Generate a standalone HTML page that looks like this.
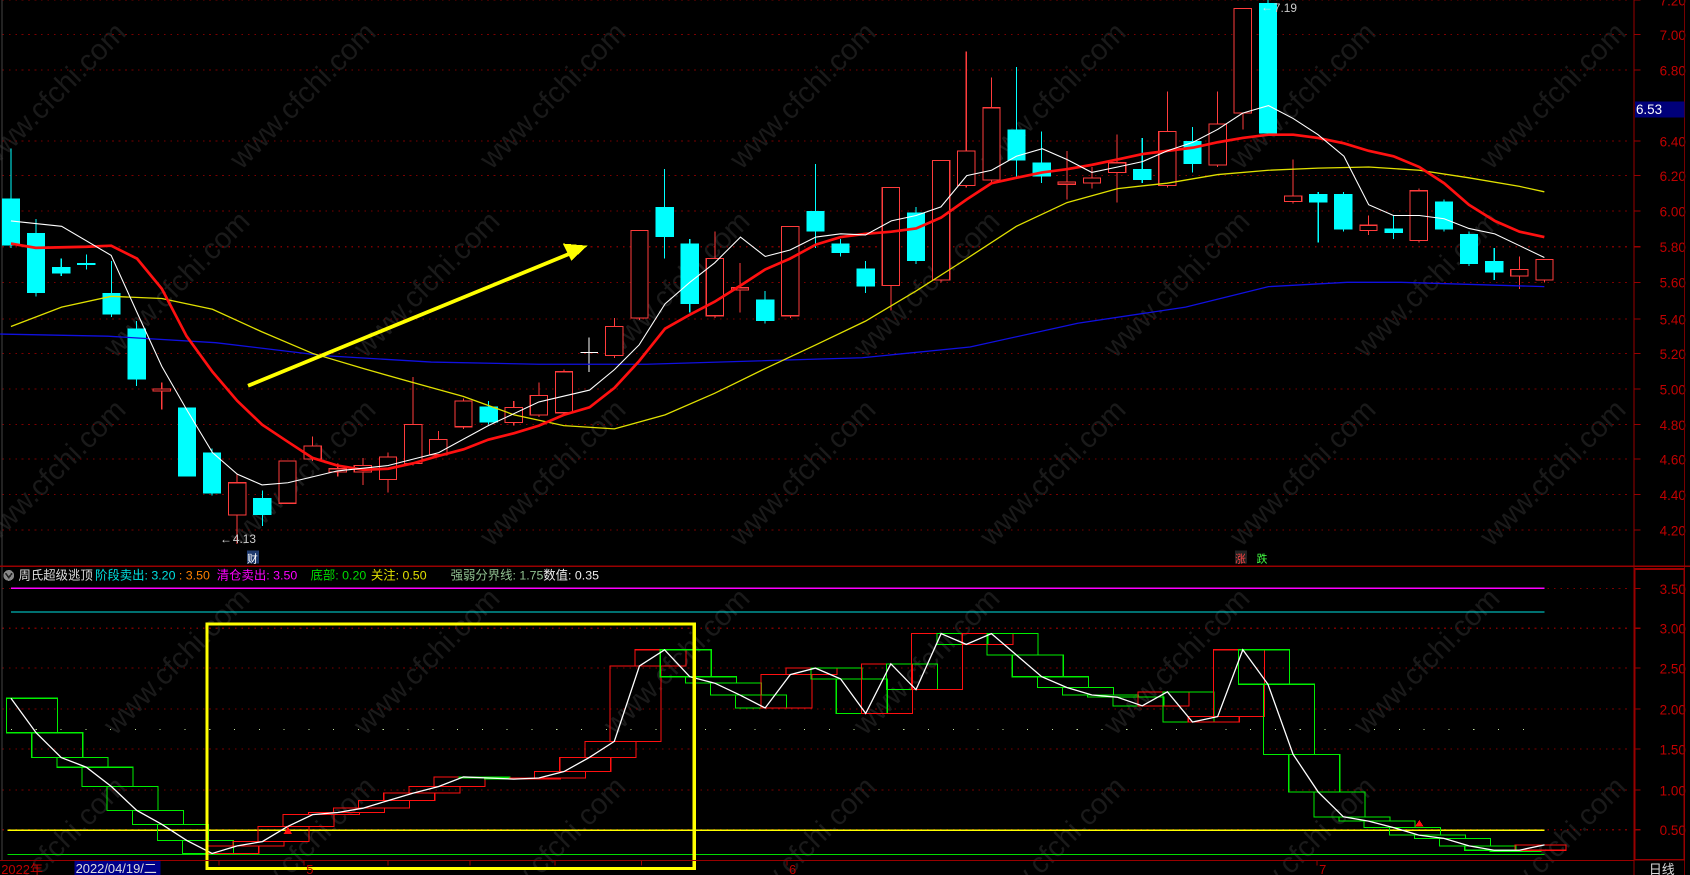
<!DOCTYPE html>
<html><head><meta charset="utf-8">
<style>
html,body{margin:0;padding:0;background:#000;overflow:hidden;width:1690px;height:875px}
svg{display:block;overflow:hidden}
text{font-family:"Liberation Sans","Noto Sans CJK SC",sans-serif}
</style></head>
<body>
<svg id="s" width="1690" height="875" viewBox="0 0 1568 812" xmlns="http://www.w3.org/2000/svg" shape-rendering="crispEdges"></svg>
<script>
var o=[];
function A(s){o.push(s)}
A('<rect width="1568" height="812" fill="#000"/>');
for(var r=0;r<5;r++)for(var c=0;c<8;c++){var x=55+c*232+(r%2?115:0),y=95+r*175;if(x>1500)continue;
A('<text x="'+x+'" y="'+y+'" fill="#1a1a1a" font-size="27" text-anchor="middle" transform="rotate(-45 '+x+' '+y+')">www.cfchi.com</text>');}
var labs=[["7.20",0],["7.00",32],["6.80",65],["6.40",131],["6.20",163],["6.00",196],["5.80",229],["5.60",262],["5.40",296],["5.20",328],["5.00",361],["4.80",394],["4.60",426],["4.40",459],["4.20",492]];
labs.forEach(function(l){A('<line x1="2" y1="'+l[1]+'" x2="1510" y2="'+l[1]+'" stroke="#7a0000" stroke-dasharray="1.5 4.5"/>');
A('<line x1="1516" y1="'+l[1]+'" x2="1522" y2="'+l[1]+'" stroke="#900"/>');
A('<text x="1540" y="'+(l[1]+5)+'" fill="#c00000" font-size="12.5">'+l[0]+'</text>');});
A('<line x1="1.5" y1="0" x2="1.5" y2="798" stroke="#444"/>');
A('<line x1="1516" y1="0" x2="1516" y2="812" stroke="#900"/>');
A('<line x1="1563" y1="0" x2="1563" y2="812" stroke="#700"/>');
A('<line x1="0" y1="525.5" x2="1568" y2="525.5" stroke="#900"/>');
A('<rect x="1517" y="94" width="46" height="15" fill="#00007a"/><text x="1518" y="106" fill="#fff" font-size="12.5">6.53</text>');
var X=function(i){return 10+i*23.33};
var C=[[184,228,138,230,'c'],[216,272,203,275,'c'],[248,254,240,256,'c'],[244,246,236,250,'c'],[272,292,242,294,'c'],[305,352,298,358,'c'],[361,363,355,380,'r'],[378,442,378,442,'c'],[420,458,416,460,'c'],[448,478,440,505,'r'],[462,478,455,488,'c'],[428,467,428,467,'r'],[414,426,405,428,'r'],[435,438,430,442,'r'],[432,438,425,450,'r'],[424,445,420,457,'r'],[394,430,350,432,'r'],[408,422,400,424,'r'],[372,396,370,398,'r'],[377,392,372,394,'c'],[378,392,372,395,'r'],[367,385,355,387,'r'],[345,383,343,385,'r'],[327,328,313,345,'w'],[303,330,295,332,'r'],[214,295,214,297,'r'],[192,220,157,240,'c'],[226,282,222,290,'c'],[240,293,215,295,'r'],[267,269,244,290,'r'],[278,298,270,300,'c'],[210,293,210,295,'r'],[196,215,152,230,'c'],[226,235,222,238,'c'],[249,266,242,272,'c'],[174,265,174,288,'r'],[197,242,192,245,'c'],[149,260,149,262,'r'],[140,172,48,174,'r'],[100,167,72,169,'r'],[120,149,62,165,'c'],[151,164,122,170,'c'],[169,171,140,185,'r'],[165,170,155,175,'r'],[151,160,125,188,'r'],[157,167,128,170,'c'],[122,172,85,174,'r'],[131,152,118,160,'c'],[115,153,85,155,'r'],[8,105,8,120,'r'],[3,124,0,126,'c'],[182,187,148,189,'r'],[180,188,178,225,'c'],[180,213,178,215,'c'],[209,214,200,218,'r'],[212,216,200,222,'c'],[177,223,175,225,'r'],[187,213,185,215,'c'],[217,245,215,247,'c'],[242,253,230,260,'c'],[250,256,238,268,'r'],[241,260,241,262,'r']];
C.forEach(function(d,i){var x=X(i),col=d[4]=='c'?'#00ffff':(d[4]=='w'?'#fff':'#ff3c3c');
A('<line x1="'+x+'" y1="'+d[2]+'" x2="'+x+'" y2="'+d[3]+'" stroke="'+col+'"/>');
if(d[4]=='c')A('<rect x="'+(x-8.5)+'" y="'+d[0]+'" width="17" height="'+Math.max(2,d[1]-d[0])+'" fill="#00ffff"/>');
else if(d[4]=='w')A('<line x1="'+(x-8)+'" y1="'+d[0]+'" x2="'+(x+8)+'" y2="'+d[0]+'" stroke="#fff"/>');
else A('<rect x="'+(x-8)+'" y="'+d[0]+'" width="16" height="'+Math.max(1,d[1]-d[0])+'" fill="#000" stroke="#ff3c3c"/>');});
function P(pts,col,w){A('<polyline points="'+pts+'" fill="none" stroke="'+col+'" stroke-width="'+w+'" shape-rendering="auto"/>')}
P("0,310 100,312 200,318 300,330 400,336 500,338 600,338 700,335 800,332 900,322 1000,300 1100,285 1177,266 1250,262 1300,262 1433,266","#1010e0",1.2);
P("10,303 57,285 103,275 150,277 197,287 243,308 290,328 337,342 383,355 430,368 477,385 523,395 570,398 617,385 663,365 710,342 757,320 803,298 850,270 897,240 943,210 990,188 1037,175 1083,170 1130,162 1177,158 1223,156 1270,155 1317,158 1363,165 1410,173 1433,178","#e0e000",1.2);
P("10,226 33,230 80,229 103,228 127,240 150,268 173,312 197,345 220,372 243,394 267,410 290,425 313,432 337,436 360,435 383,430 407,423 430,417 453,408 477,402 500,395 523,385 547,378 570,360 593,335 617,305 640,292 663,280 687,265 710,250 733,240 757,227 780,220 803,217 827,215 850,212 873,202 897,185 920,170 943,165 967,160 990,157 1013,153 1037,148 1060,143 1083,140 1107,137 1130,132 1153,128 1177,125 1200,125 1223,128 1247,133 1270,140 1293,145 1317,155 1340,170 1363,190 1387,205 1410,215 1433,220","#ff1010",2.5);
P("10,205 57,210 103,237 127,290 150,340 173,380 197,420 220,440 243,450 267,448 313,437 360,432 407,420 453,395 500,373 547,362 570,343 593,320 617,282 640,262 663,244 687,220 710,238 733,232 757,220 780,217 803,218 827,205 850,200 873,192 897,163 920,158 943,145 967,138 990,148 1013,160 1037,155 1060,150 1083,140 1107,132 1130,120 1153,105 1177,98 1200,110 1223,125 1247,145 1270,190 1293,200 1317,200 1340,203 1363,212 1387,217 1410,228 1433,239","#fff",1);
A('<line x1="230" y1="358" x2="532" y2="234" stroke="#ffff00" stroke-width="3.5" shape-rendering="auto"/><polygon points="545,228 522,226 530,242" fill="#ffff00"/>');
A('<text x="204" y="504" fill="#ddd" font-size="11">←</text><text x="216" y="504" fill="#ccc" font-size="11">4.13</text>');
A('<text x="1170" y="10" fill="#ddd" font-size="11">←</text><text x="1182" y="11" fill="#ccc" font-size="11">7.19</text>');
A('<rect x="229" y="511" width="11" height="12" fill="#1e3a6e"/><text x="229" y="522" fill="#fff" font-size="10">财</text>');
A('<rect x="1146" y="511" width="11" height="12" fill="#222"/><text x="1146" y="522" fill="#f44" font-size="10">涨</text><text x="1166" y="522" fill="#4f4" font-size="10">跌</text>');
A('<circle cx="8" cy="534" r="5" fill="#888"/><path d="M5,532 L8,536 L11,532" stroke="#222" fill="none" stroke-width="1.5"/>');
A('<text y="538" font-size="11.5"><tspan x="17" fill="#ddd">周氏超级逃顶</tspan><tspan x="88" fill="#00e0e0">阶段卖出: 3.20</tspan><tspan fill="#ff8000"> : 3.50</tspan><tspan x="201" fill="#ff00ff">清仓卖出: 3.50</tspan><tspan x="288" fill="#00dd00">底部: 0.20</tspan><tspan x="344" fill="#e0e000">关注: 0.50</tspan><tspan x="418" fill="#90c090">强弱分界线: 1.75</tspan><tspan x="504" fill="#eee">数值: 0.35</tspan></text>');
var bl=[["3.50",546],["3.00",583],["2.50",620],["2.00",658],["1.50",695],["1.00",733],["0.50",770]];
bl.forEach(function(l){A('<line x1="2" y1="'+l[1]+'" x2="1510" y2="'+l[1]+'" stroke="#7a0000" stroke-dasharray="1.5 4.5"/><line x1="1516" y1="'+l[1]+'" x2="1522" y2="'+l[1]+'" stroke="#900"/><text x="1540" y="'+(l[1]+5)+'" fill="#c00000" font-size="12.5">'+l[0]+'</text>')});
A('<rect x="1517" y="528" width="46" height="270" fill="none" stroke="#900" stroke-width="1.5"/>');
A('<line x1="10" y1="546" x2="1433" y2="546" stroke="#ff00ff" stroke-width="1.2"/>');
A('<line x1="10" y1="568" x2="1433" y2="568" stroke="#00e0e0" stroke-width="1.2"/>');
A('<line x1="10" y1="677" x2="1433" y2="677" stroke="#c0e0a0" stroke-dasharray="1 22"/>');
A('<line x1="7" y1="770.5" x2="1433" y2="770.5" stroke="#ffff00" stroke-width="1.2"/>');
A('<line x1="7" y1="793" x2="1433" y2="793" stroke="#00dd00" stroke-width="1.2"/>');
var V=[648,680,703,712,730,752,765,780,792,785,781,767,756,754,750,743,736,730,721,722,723,722,716,703,688,618,603,628,634,645,657,626,620,630,662,616,640,588,598,588,608,628,638,645,647,655,642,670,665,603,635,700,735,758,762,768,775,778,785,789,789,784];
for(var i=1;i<V.length;i++){var a=V[i-1],b=V[i],up=b<a;var x0=X(i-1)-4,x1=X(i)+20;
A('<rect x="'+x0+'" y="'+Math.min(a,b)+'" width="'+(x1-x0)+'" height="'+Math.max(1,Math.abs(a-b))+'" fill="none" stroke="'+(up?'#ff1010':'#00ee00')+'"/>');}
var pts=V.map(function(v,i){return X(i)+','+v}).join(' ');
P(pts,"#fff",1.2);
A('<rect x="192" y="579" width="452" height="227" fill="none" stroke="#ffff00" stroke-width="3"/>');
A('<polygon points="267,767 263,774 271,774" fill="#ff1010"/><polygon points="1317,761 1313,767 1321,767" fill="#ff1010"/>');
A('<line x1="0" y1="798.5" x2="1516" y2="798.5" stroke="#900"/>');
A('<text x="1" y="811" fill="#c00000" font-size="12">2022年</text>');
A('<rect x="69" y="799" width="80" height="13" fill="#00008a"/><text x="70" y="810" fill="#ddd" font-size="12">2022/04/19/二</text>');
[[203,''],[282,'5'],[360,''],[436,''],[515,''],[595,''],[730,'6'],[1222,'7']].forEach(function(t){A('<line x1="'+t[0]+'" y1="799" x2="'+t[0]+'" y2="803" stroke="#900"/>');if(t[1])A('<text x="'+(t[0]+2)+'" y="811" fill="#c00000" font-size="12">'+t[1]+'</text>')});
A('<text x="1530" y="811" fill="#ddd" font-size="12">日线</text>');
document.getElementById('s').innerHTML=o.join('');
</script>
</body></html>
